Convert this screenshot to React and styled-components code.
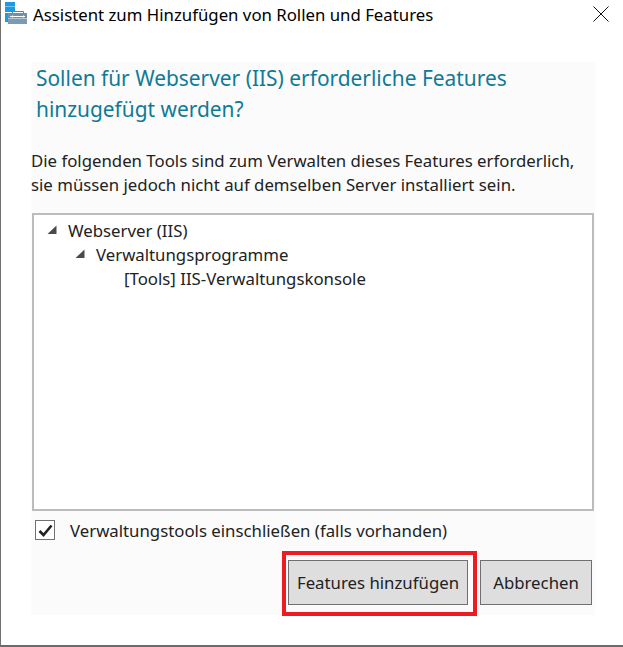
import React from 'react';
import styled, { createGlobalStyle } from 'styled-components';

const Global = createGlobalStyle`
  html, body { margin: 0; padding: 0; background: #fff; }
  body { font-family: "Noto Sans", "Open Sans", sans-serif; }
`;

const Win = styled.div`
  width: 623px;
  height: 647px;
  box-sizing: border-box;
  background: #fff;
  border-left: 1px solid #707070;
  border-bottom: 2px solid #6b6b6b;
  display: flex;
  flex-direction: column;
  overflow: hidden;
`;
const TitleBar = styled.div`
  height: 62px;
  flex: none;
  display: flex;
  align-items: flex-start;
  padding: 2px 20px 0 4px;
  box-sizing: border-box;
`;
const TitleText = styled.div`
  font-size: 16.8px;
  line-height: 26px;
  margin-left: 4px;
  color: #000;
  flex: 1;
  white-space: nowrap;
`;
const Close = styled.svg`
  width: 16px;
  height: 16px;
  margin-top: 4px;
  margin-right: -6px;
  flex: none;
`;
const Panel = styled.div`
  margin-left: 30px;
  width: 564px;
  height: 553px;
  background: #fbfbfb;
  display: flex;
  flex-direction: column;
  box-sizing: border-box;
`;
const Heading = styled.h1`
  margin: 0;
  padding: 1px 0 0 5px;
  font-size: 20.9px;
  line-height: 31px;
  font-weight: 400;
  color: #0f7a96;
  white-space: nowrap;
  height: 76px;
  box-sizing: border-box;
`;
const Intro = styled.p`
  margin: 0;
  padding: 11px 0 0 0;
  box-sizing: border-box;
  font-size: 16.8px;
  line-height: 24px;
  color: #222;
  height: 75px;
  white-space: nowrap;
`;
const Tree = styled.div`
  width: 562px;
  height: 298px;
  margin-left: 1px;
  box-sizing: border-box;
  background: #fff;
  border: 2px solid #bcbcbc;
  padding: 3px 0 0 0;
  flex: none;
`;
const TreeRow = styled.div`
  display: flex;
  align-items: center;
  height: 24px;
  padding-left: ${p => p.$indent}px;
  font-size: 16.8px;
  color: #222;
  white-space: nowrap;
`;
const Arrow = styled.svg`
  width: 10px;
  height: 10px;
  margin-right: 11px;
  flex: none;
`;
const CheckRow = styled.label`
  display: flex;
  align-items: center;
  height: 30px;
  margin-top: 4px;
  padding-left: 4px;
  font-size: 16.8px;
  color: #222;
  white-space: nowrap;
`;
const CheckBox = styled.span`
  width: 20px;
  height: 20px;
  box-sizing: border-box;
  border: 1px solid #707070;
  background: #fff;
  margin-right: 15px;
  display: flex;
  align-items: center;
  justify-content: center;
  flex: none;
`;
const Buttons = styled.div`
  display: flex;
  justify-content: flex-end;
  gap: 12px;
  padding-right: 3px;
  margin-top: 15px;
  position: relative;
`;
const Button = styled.button`
  width: ${p => p.$w}px;
  height: 45px;
  box-sizing: border-box;
  background: #dedede;
  border: 1px solid #707070;
  font-family: inherit;
  font-size: 16.8px;
  color: #222;
  padding: 0;
`;
const Highlight = styled.div`
  position: absolute;
  left: 251px;
  top: -9px;
  width: 195px;
  height: 65px;
  box-sizing: border-box;
  border: 4px solid #ed1c24;
  pointer-events: none;
`;

const TriangleIcon = () => (
  <Arrow viewBox="0 0 10 10"><path d="M9.5 .5 V9 H.5 Z" fill="#4a4a4a" /></Arrow>
);

export default function App() {
  return (
    <Win>
      <Global />
      <TitleBar>
        <svg width="24" height="22" viewBox="0 0 24 22" style={{ flex: 'none' }}>
          <rect x="0" y="0" width="10" height="4.6" fill="#1e9be0" />
          <rect x="0" y="5" width="10" height="5" fill="#1e9be0" />
          <rect x="0" y="11" width="3" height="9" fill="#1e9be0" />
          <path d="M7.5 11 V9.5 H18.5 V11" fill="none" stroke="#5f7f97" strokeWidth="1" />
          <rect x="3" y="11" width="19" height="5.5" fill="#6f90a9" />
          <rect x="3" y="17" width="19" height="5" fill="#7c9ab2" />
          <path d="M5 14.5 H20" stroke="#fff" strokeWidth="1" />
          <path d="M7.5 13.5 V15.5 M18.5 13.5 V15.5" stroke="#fff" strokeWidth="1" />
        </svg>
        <TitleText>Assistent zum Hinzufügen von Rollen und Features</TitleText>
        <Close viewBox="0 0 16 16"><path d="M.5.5 15.5 15.5 M15.5.5 .5 15.5" stroke="#111" strokeWidth="1" fill="none" /></Close>
      </TitleBar>
      <Panel>
        <Heading>Sollen für Webserver (IIS) erforderliche Features<br />hinzugefügt werden?</Heading>
        <Intro>Die folgenden Tools sind zum Verwalten dieses Features erforderlich,<br />sie müssen jedoch nicht auf demselben Server installiert sein.</Intro>
        <Tree>
          <TreeRow $indent={13}><TriangleIcon />Webserver (IIS)</TreeRow>
          <TreeRow $indent={41}><TriangleIcon />Verwaltungsprogramme</TreeRow>
          <TreeRow $indent={90}>[Tools] IIS-Verwaltungskonsole</TreeRow>
        </Tree>
        <CheckRow>
          <CheckBox>
            <svg width="15" height="13" viewBox="0 0 15 13"><path d="M1.5 7 5.5 11 13.5 1.5" fill="none" stroke="#222" strokeWidth="2.6" /></svg>
          </CheckBox>
          Verwaltungstools einschließen (falls vorhanden)
        </CheckRow>
        <Buttons>
          <Button $w={180}>Features hinzufügen</Button>
          <Button $w={112}>Abbrechen</Button>
          <Highlight />
        </Buttons>
      </Panel>
    </Win>
  );
}
